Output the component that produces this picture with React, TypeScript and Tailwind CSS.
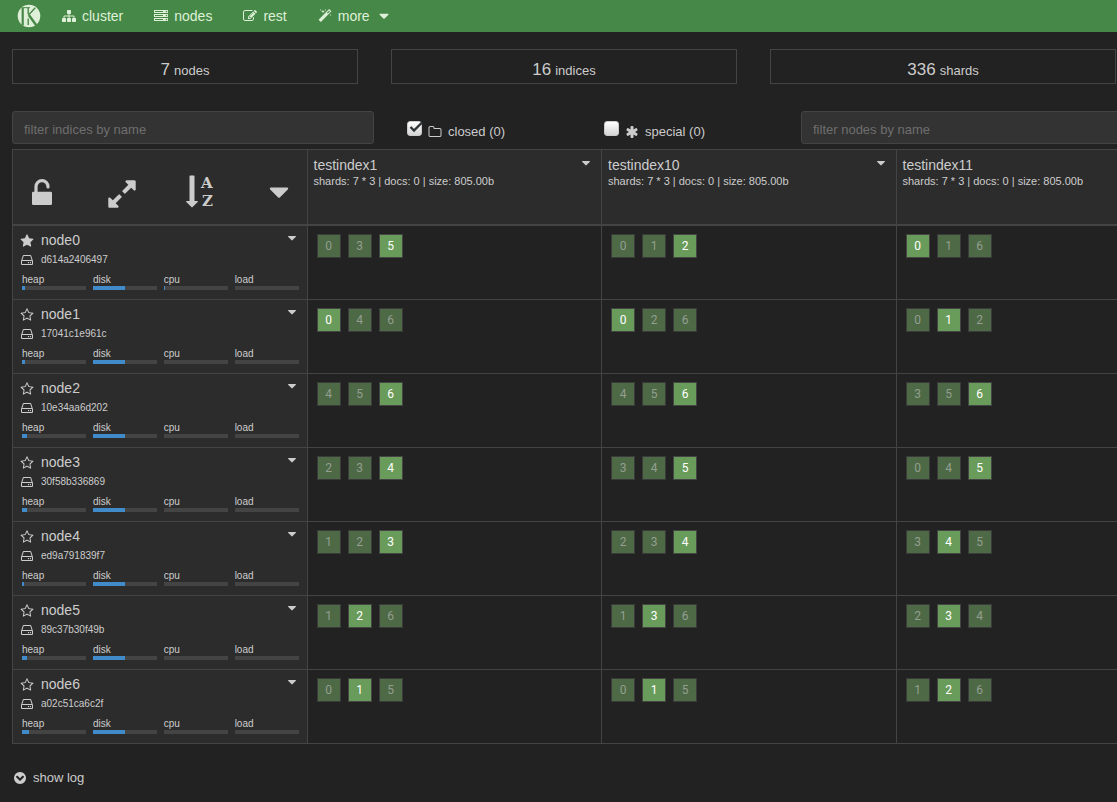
import type { ReactNode } from "react";

const PATHS = {
  sitemap:
    "M1792 1248v320q0 40-28 68t-68 28h-320q-40 0-68-28t-28-68v-320q0-40 28-68t68-28h96v-192h-512v192h96q40 0 68 28t28 68v320q0 40-28 68t-68 28h-320q-40 0-68-28t-28-68v-320q0-40 28-68t68-28h96v-192h-512v192h96q40 0 68 28t28 68v320q0 40-28 68t-68 28h-320q-40 0-68-28t-28-68v-320q0-40 28-68t68-28h96v-192q0-52 38-90t90-38h512v-192h-96q-40 0-68-28t-28-68v-320q0-40 28-68t68-28h320q40 0 68 28t28 68v320q0 40-28 68t-68 28h-96v192h512q52 0 90 38t38 90v192h96q40 0 68 28t28 68z",
  server:
    "M128 1408h1024v-128h-1024v128zm0-512h1024v-128h-1024v128zm1568 448q0-40-28-68t-68-28-68 28-28 68 28 68 68 28 68-28 28-68zm-1568-960h1024v-128h-1024v128zm1568 448q0-40-28-68t-68-28-68 28-28 68 28 68 68 28 68-28 28-68zm0-512q0-40-28-68t-68-28-68 28-28 68 28 68 68 28 68-28 28-68zm96 832v384h-1792v-384h1792zm0-512v384h-1792v-384h1792zm0-512v384h-1792v-384h1792z",
  edit: "M888 1184l116-116-152-152-116 116v56h96v96h56zm440-720q-16-16-33 1l-350 350q-17 17-1 33t33-1l350-350q17-17 1-33zm80 594v190q0 119-84.5 203.5t-203.5 84.5h-832q-119 0-203.5-84.5t-84.5-203.5v-832q0-119 84.5-203.5t203.5-84.5h832q63 0 117 25 15 7 18 23 3 17-9 29l-49 49q-14 14-32 8-23-6-45-6h-832q-66 0-113 47t-47 113v832q0 66 47 113t113 47h832q66 0 113-47t47-113v-126q0-13 9-22l64-64q15-15 35-7t20 29zm-96-738l288 288-672 672h-288v-288zm444 132l-92 92-288-288 92-92q28-28 68-28t68 28l152 152q28 28 28 68t-28 68z",
  magic:
    "M1254 581l293-293-107-107-293 293zm447-293q0 27-18 45l-1286 1286q-18 18-45 18t-45-18l-198-198q-18-18-18-45t18-45l1286-1286q18-18 45-18t45 18l198 198q18 18 18 45zm-1351-190l98 30-98 30-30 98-30-98-98-30 98-30 30-98zm350 162l196 60-196 60-60 196-60-196-196-60 196-60 60-196zm930 478l98 30-98 30-30 98-30-98-98-30 98-30 30-98zm-640-640l98 30-98 30-30 98-30-98-98-30 98-30 30-98z",
  caret:
    "M1408 704q0 26-19 45l-448 448q-19 19-45 19t-45-19l-448-448q-19-19-19-45t19-45 45-19h896q26 0 45 19t19 45z",
  expand:
    "M883 1056q0 13-10 23l-332 332 144 144q19 19 19 45t-19 45-45 19h-448q-26 0-45-19t-19-45v-448q0-26 19-45t45-19 45 19l144 144 332-332q10-10 23-10t23 10l114 114q10 10 10 23zm781-864v448q0 26-19 45t-45 19-45-19l-144-144-332 332q-10 10-23 10t-23-10l-114-114q-10-10-10-23t10-23l332-332-144-144q-19-19-19-45t19-45 45-19h448q26 0 45 19t19 45z",
  star: "M1728 647q0 22-26 48l-363 354 86 500q1 7 1 20 0 21-10.5 35.5t-30.5 14.5q-19 0-40-12l-449-236-449 236q-22 12-40 12-21 0-31.5-14.5t-10.5-35.5q0-6 2-20l86-500-364-354q-25-27-25-48 0-37 56-46l502-73 225-455q19-41 49-41t49 41l225 455 502 73q56 9 56 46z",
  starOutline:
    "M1201 1004l306-297-422-62-189-382-189 382-422 62 306 297-73 421 378-199 377 199zm527-357q0 22-26 48l-363 354 86 500q1 7 1 20 0 50-41 50-19 0-40-12l-449-236-449 236q-22 12-40 12-21 0-31.5-14.5t-10.5-35.5q0-6 2-20l86-500-364-354q-25-27-25-48 0-37 56-46l502-73 225-455q19-41 49-41t49 41l225 455 502 73q56 9 56 46z",
  hdd: "M1168 1216q0 33-23.5 56.5t-56.5 23.5-56.5-23.5-23.5-56.5 23.5-56.5 56.5-23.5 56.5 23.5 23.5 56.5zm256 0q0 33-23.5 56.5t-56.5 23.5-56.5-23.5-23.5-56.5 23.5-56.5 56.5-23.5 56.5 23.5 23.5 56.5zm112 160v-320q0-13-9.5-22.5t-22.5-9.5h-1216q-13 0-22.5 9.5t-9.5 22.5v320q0 13 9.5 22.5t22.5 9.5h1216q13 0 22.5-9.5t9.5-22.5zm-1230-480h1180l-157-482q-4-13-16-21.5t-26-8.5h-782q-14 0-26 8.5t-16 21.5zm1358 160v320q0 66-47 113t-113 47h-1216q-66 0-113-47t-47-113v-320q0-25 16-75l197-606q17-53 63-86t101-33h782q55 0 101 33t63 86l197 606q16 50 16 75z",
  folder:
    "M1600 1312v-704q0-40-28-68t-68-28h-704q-40 0-68-28t-28-68v-64q0-40-28-68t-68-28h-320q-40 0-68 28t-28 68v960q0 40 28 68t68 28h1216q40 0 68-28t28-68zm128-704v704q0 92-66 158t-158 66h-1216q-92 0-158-66t-66-158v-960q0-92 66-158t158-66h320q92 0 158 66t66 158v32h672q92 0 158 66t66 158z",
  asterisk:
    "M1546 1050q46 26 59.5 77.5t-12.5 97.5l-64 110q-26 46-77.5 59.5t-97.5-12.5l-266-153v307q0 52-38 90t-90 38h-128q-52 0-90-38t-38-90v-307l-266 153q-46 26-97.5 12.5t-77.5-59.5l-64-110q-26-46-12.5-97.5t59.5-77.5l266-154-266-154q-46-26-59.5-77.5t12.5-97.5l64-110q26-46 77.5-59.5t97.5 12.5l266 153v-307q0-52 38-90t90-38h128q52 0 90 38t38 90v307l266-153q46-26 97.5-12.5t77.5 59.5l64 110q26 46 12.5 97.5t-59.5 77.5l-266 154z",
  chevronCircle:
    "M941 1259l454-454q19-19 19-45t-19-45l-102-102q-19-19-45-19t-45 19l-307 307-307-307q-19-19-45-19t-45 19l-102 102q-19 19-19 45t19 45l454 454q19 19 45 19t45-19zm723-363q0 209-103 385.5t-279.5 279.5-385.5 103-385.5-103-279.5-279.5-103-385.5 103-385.5 279.5-279.5 385.5-103 385.5 103 279.5 279.5 103 385.5z",
};

function Icon({ name, className }: { name: keyof typeof PATHS; className: string }) {
  return (
    <svg viewBox="0 0 1792 1792" fill="currentColor" aria-hidden="true" className={className}>
      <path fillRule="evenodd" d={PATHS[name]} />
    </svg>
  );
}

function Logo() {
  return (
    <svg viewBox="0 0 24 24" aria-hidden="true" className="size-6">
      <circle cx="12" cy="12" r="11.3" fill="#dff0d8" />
      <g stroke="#468847" fill="none">
        <path d="M5.700 4V21.500" strokeWidth="2.200" />
        <path d="M4.500 3.700H13" strokeWidth="1" />
        <path d="M11.200 4v6M11.200 14.500V21" strokeWidth="1.400" />
        <path d="M18.300 3.800L11.300 11.300" strokeWidth="1.400" />
        <path d="M11.800 11L19.800 22" strokeWidth="2.400" />
      </g>
    </svg>
  );
}

function UnlockIcon() {
  return (
    <svg viewBox="0 0 20 26" aria-hidden="true" className="h-[26px] w-5">
      <rect y="12.700" width="20" height="13.300" rx="1.300" fill="currentColor" />
      <path
        d="M4 14V7.700a6 6 0 0 1 12 0V8"
        fill="none"
        stroke="currentColor"
        strokeWidth="3.200"
        strokeLinecap="round"
      />
    </svg>
  );
}

function SortIcon() {
  return (
    <svg viewBox="0 0 30 36" aria-hidden="true" className="h-9 w-[30px]" fill="currentColor">
      <path d="M5 1.500h4q.5 0 .5.500V27H12.500q.8.400.200 1.100L7.600 33q-.6.500-1.200 0L1.300 28.100Q.7 27.400 1.500 27H4.500V2Q4.500 1.500 5 1.500z" />
      <text x="16" y="14" fontSize="15" fontWeight="700" fontFamily="DejaVu Serif, serif">A</text>
      <text x="17" y="32" fontSize="15" fontWeight="700" fontFamily="DejaVu Serif, serif">Z</text>
    </svg>
  );
}

function NavLink({ icon, children }: { icon: ReactNode; children: ReactNode }) {
  return (
    <a href="#" className="flex items-center gap-1.5 text-[14px] leading-5 text-[#dff0d8]">
      {icon}
      {children}
    </a>
  );
}

const STATS = [
  { value: 7, label: "nodes" },
  { value: 16, label: "indices" },
  { value: 336, label: "shards" },
];

const INDICES = ["testindex1", "testindex10", "testindex11"];

type Shard = [id: number, primary?: boolean];
type Node = { name: string; host: string; master?: boolean; heap: number; cpu: number; shards: Shard[][] };

const NODES: Node[] = [
  { name: "node0", host: "d614a2406497", master: true, heap: 5, cpu: 1, shards: [[[0], [3], [5, true]], [[0], [1], [2, true]], [[0, true], [1], [6]]] },
  { name: "node1", host: "17041c1e961c", heap: 5, cpu: 0, shards: [[[0, true], [4], [6]], [[0, true], [2], [6]], [[0], [1, true], [2]]] },
  { name: "node2", host: "10e34aa6d202", heap: 8, cpu: 0, shards: [[[4], [5], [6, true]], [[4], [5], [6, true]], [[3], [5], [6, true]]] },
  { name: "node3", host: "30f58b336869", heap: 8, cpu: 0, shards: [[[2], [3], [4, true]], [[3], [4], [5, true]], [[0], [4], [5, true]]] },
  { name: "node4", host: "ed9a791839f7", heap: 3, cpu: 0, shards: [[[1], [2], [3, true]], [[2], [3], [4, true]], [[3], [4, true], [5]]] },
  { name: "node5", host: "89c37b30f49b", heap: 8, cpu: 0, shards: [[[1], [2, true], [6]], [[1], [3, true], [6]], [[2], [3, true], [4]]] },
  { name: "node6", host: "a02c51ca6c2f", heap: 11, cpu: 0, shards: [[[0], [1, true], [5]], [[0], [1, true], [5]], [[1], [2, true], [6]]] },
];

function Meter({ label, value }: { label: string; value: number }) {
  return (
    <div>
      <div className="text-[10px] leading-3">{label}</div>
      <div className="h-1 bg-[#444]">
        <div className="h-1 bg-[#428bca]" style={{ width: `${value}%` }} />
      </div>
    </div>
  );
}

function Filter({ placeholder }: { placeholder: string }) {
  return (
    <input
      type="text"
      aria-label={placeholder}
      placeholder={placeholder}
      className="h-[33px] w-[362px] shrink-0 rounded-[3px] border border-[#444] bg-[#333] px-[11px] pt-1 text-[13px] text-[#ccc] placeholder:text-[#6e6e6e]"
    />
  );
}

function Toggle({ icon, label, checked }: { icon: ReactNode; label: string; checked?: boolean }) {
  return (
    <label className="flex w-[164px] shrink-0 items-center pt-2">
      <span className="relative mb-1.5 size-[15px]">
        <input
          type="checkbox"
          defaultChecked={checked}
          className="peer block size-[15px] appearance-none rounded-[3px] border border-[#ccc] bg-linear-to-b from-white to-[#d4d4d4]"
        />
        <svg
          viewBox="0 0 16 16"
          aria-hidden="true"
          className="pointer-events-none absolute inset-0 hidden size-4 peer-checked:block"
          fill="none"
          stroke="#2e3436"
          strokeWidth="2.400"
        >
          <path d="M3.500 6L7 9.500L15 1.500" />
        </svg>
      </span>
      <span className="mr-1.5 ml-1.5 flex">{icon}</span>
      {label}
    </label>
  );
}

export default function App() {
  return (
    <div className="min-h-screen overflow-x-hidden bg-[#222] font-['Liberation_Sans',Arial,sans-serif] text-[13px] leading-4 text-[#ccc]">
      <nav className="flex h-8 items-center bg-[#468847] pl-[17px]">
        <a href="#" aria-label="kopf" className="mr-[21px]">
          <Logo />
        </a>
        <div className="flex gap-[31px]">
          <NavLink icon={<Icon name="sitemap" className="size-3.5" />}>cluster</NavLink>
          <NavLink icon={<Icon name="server" className="size-3.5" />}>nodes</NavLink>
          <NavLink icon={<Icon name="edit" className="size-3.5" />}>rest</NavLink>
          <NavLink icon={<Icon name="magic" className="size-3.5" />}>
            more
            <Icon name="caret" className="size-4" />
          </NavLink>
        </div>
      </nav>

      <main className="w-full min-w-[1191px] pl-3">
        <section className="flex gap-[33px] pt-[17px]">
          {STATS.map((s) => (
            <div key={s.label} className="flex h-[35px] w-[346px] shrink-0 items-baseline justify-center gap-1 border border-[#444] pt-2.5">
              <span className="text-[17px] leading-5">{s.value}</span>
              <span>{s.label}</span>
            </div>
          ))}
        </section>

        <form className="mt-[27px] flex h-[33px] gap-[33px]">
          <Filter placeholder="filter indices by name" />
          <Toggle checked icon={<Icon name="folder" className="size-3.5" />} label="closed (0)" />
          <Toggle icon={<Icon name="asterisk" className="size-3.5" />} label="special (0)" />
          <Filter placeholder="filter nodes by name" />
        </form>

        <table className="mt-[5px] w-full table-fixed border-collapse text-left">
          <thead>
            <tr className="h-[75px] border-t border-b-2 border-[#444] bg-[#2c2c2c]">
              <th className="border-x border-[#444] p-0 font-normal">
                <div className="flex h-[74px] items-center justify-between pt-2.5 pr-3 pl-[19px]">
                  <button type="button" aria-label="lock">
                    <UnlockIcon />
                  </button>
                  <button type="button" aria-label="expand" className="pt-1 pl-1.5">
                    <Icon name="expand" className="size-8" />
                  </button>
                  <button type="button" aria-label="sort">
                    <SortIcon />
                  </button>
                  <button type="button" aria-label="options">
                    <Icon name="caret" className="size-8" />
                  </button>
                </div>
              </th>
              {INDICES.map((name) => (
                <th key={name} className="border-x border-[#444] p-0 align-top font-normal">
                  <div className="flex justify-between pt-[5px] pr-2 pl-1.5">
                    <div>
                      <div className="text-[14px] leading-5">{name}</div>
                      <div className="text-[11px] leading-3">shards: 7 * 3 | docs: 0 | size: 805.00b</div>
                    </div>
                    <button type="button" aria-label={`${name} options`} className="self-start pt-px">
                      <Icon name="caret" className="size-3.5" />
                    </button>
                  </div>
                </th>
              ))}
            </tr>
          </thead>
          <tbody>
            {NODES.map((n) => (
              <tr key={n.name} className="h-[74px] border-b border-[#444]">
                <td className="border-x border-[#444] bg-[#2c2c2c] p-0 align-top">
                  <div className="pt-1 pr-2 pl-[7px]">
                    <div className="flex h-5 items-center">
                      <span className="mr-[7px] pt-0.5">
                        <Icon name={n.master ? "star" : "starOutline"} className="size-3.5" />
                      </span>
                      <span className="flex-1 text-[14px] leading-5">{n.name}</span>
                      <button type="button" aria-label={`${n.name} options`} className="self-start pt-px">
                        <Icon name="caret" className="size-3.5" />
                      </button>
                    </div>
                    <div className="flex h-5 items-center text-[10px]">
                      <Icon name="hdd" className="mr-[7px] size-3.5" />
                      {n.host}
                    </div>
                    <div className="ml-0.5 grid grid-cols-4 gap-[7px] pt-1">
                      <Meter label="heap" value={n.heap} />
                      <Meter label="disk" value={51} />
                      <Meter label="cpu" value={n.cpu} />
                      <Meter label="load" value={0} />
                    </div>
                  </div>
                </td>
                {n.shards.map((cell, i) => (
                  <td key={INDICES[i]} className="border-x border-[#444] p-0 align-top">
                    <div className="flex gap-[7px] pt-2 pl-[9px]">
                      {cell.map(([id, primary]) => (
                        <span
                          key={id}
                          className={
                            primary
                              ? "flex size-6 items-center justify-center border border-[#444] bg-[#699b5b] font-[Roboto,sans-serif] text-[12px] text-white"
                              : "flex size-6 items-center justify-center border border-[#3a3a3a] bg-[#4d6945] font-[Roboto,sans-serif] text-[12px] text-[#949e91]"
                          }
                        >
                          {id}
                        </span>
                      ))}
                    </div>
                  </td>
                ))}
              </tr>
            ))}
          </tbody>
        </table>

        <button type="button" className="mt-[26px] ml-px flex items-center gap-1.5">
          <Icon name="chevronCircle" className="size-3.5" />
          show log
        </button>
      </main>
    </div>
  );
}
